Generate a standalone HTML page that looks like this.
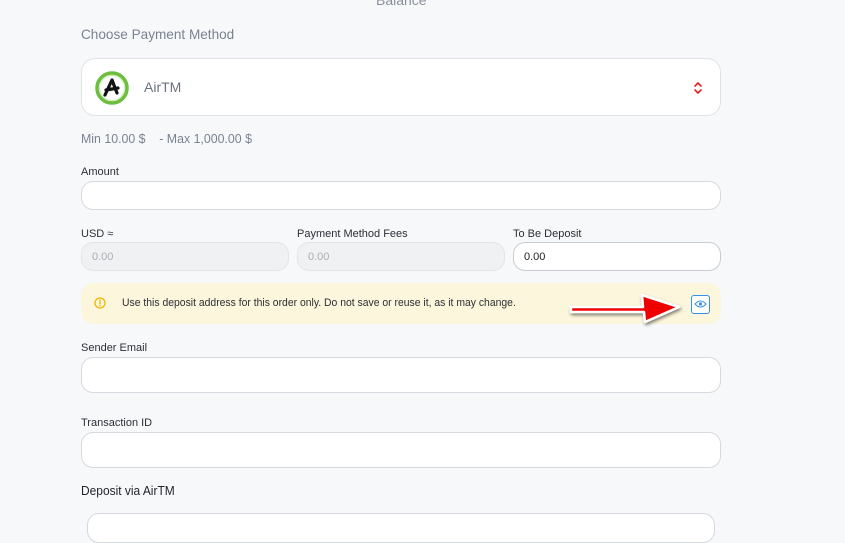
<!DOCTYPE html>
<html><head><meta charset="utf-8">
<style>
*{margin:0;padding:0;box-sizing:border-box}
body{width:845px;height:515px;overflow:hidden;background:#f7f8fa;font-family:"Liberation Sans",sans-serif;position:relative}
.a{position:absolute;white-space:nowrap}
.lbl{font-size:11px;color:#2b2f36}
.inp{position:absolute;background:#fff;border:1px solid #d6d9df;border-radius:12px}
.dis{background:#f0f1f3;border-color:#e2e4e8}
.val{font-size:11px;position:absolute;left:10px;top:8px}
.sx{transform-origin:left}
</style></head><body>
<div class="a" style="left:376px;top:-8px;font-size:14px;color:#8a909a">Balance</div>
<div class="a sx" style="left:81px;top:26px;font-size:14px;color:#7a8290;transform:scaleX(0.97)">Choose Payment Method</div>
<div class="inp" style="left:81px;top:58px;width:640px;height:58px;border-radius:14px;border-color:#e0e2e6">
  <svg class="a" style="left:13px;top:12px" width="34" height="34" viewBox="0 0 34 34">
    <circle cx="17" cy="17" r="15" fill="#fff" stroke="#6bbf3a" stroke-width="3.5"/>
    <circle cx="17" cy="17" r="12.5" fill="none" stroke="#cde8b8" stroke-width="1"/>
    <path d="M10 24 L17 9 L22 22 M11 19 L23 17" fill="none" stroke="#111" stroke-width="3.2" stroke-linecap="round" stroke-linejoin="round"/>
  </svg>
  <div class="a" style="left:62px;top:20px;font-size:14px;color:#6c7380">AirTM</div>
  <svg class="a" style="left:611px;top:21px" width="10" height="16" viewBox="0 0 10 16">
    <path d="M2 6 L5 3 L8 6 M2 10 L5 13 L8 10" fill="none" stroke="#e02020" stroke-width="1.6" stroke-linecap="round"/>
  </svg>
</div>
<div class="a sx" style="left:81px;top:131px;font-size:13px;color:#7a8290;transform:scaleX(0.95)">Min 10.00 $&nbsp;&nbsp;&nbsp; - Max 1,000.00 $</div>
<div class="a lbl" style="left:81px;top:166px">Amount</div>
<div class="inp" style="left:81px;top:181px;width:640px;height:29px"></div>
<div class="a lbl" style="left:81px;top:228px">USD ≈</div>
<div class="a lbl" style="left:297px;top:228px">Payment Method Fees</div>
<div class="a lbl" style="left:513px;top:228px">To Be Deposit</div>
<div class="inp dis" style="left:81px;top:242px;width:208px;height:29px"><span class="val" style="color:#a8adb5">0.00</span></div>
<div class="inp dis" style="left:297px;top:242px;width:208px;height:29px"><span class="val" style="color:#a8adb5">0.00</span></div>
<div class="inp" style="left:513px;top:242px;width:208px;height:29px;border-color:#c9ccd2"><span class="val" style="color:#222">0.00</span></div>
<div class="a" style="left:81px;top:283px;width:640px;height:41px;background:#fcf7dc;border-radius:12px"></div>
<svg class="a" style="left:94px;top:297px" width="12" height="12" viewBox="0 0 12 12"><circle cx="6" cy="6" r="5" fill="none" stroke="#f0b400" stroke-width="1.3"/><path d="M6 3.2V6.6M6 8.2V8.8" stroke="#f0b400" stroke-width="1.3" stroke-linecap="round"/></svg>
<div class="a sx" style="left:122px;top:297px;font-size:11px;color:#2b2f36;transform:scaleX(0.945)">Use this deposit address for this order only. Do not save or reuse it, as it may change.</div>
<div class="a" style="left:691px;top:295px;width:19px;height:19px;border:1px solid #3a8ee6;border-radius:3px;background:#fff"></div>
<svg class="a" style="left:694px;top:299px" width="13" height="10" viewBox="0 0 13 10"><path d="M1 5 Q6.5 -1 12 5 Q6.5 11 1 5Z" fill="none" stroke="#3a8ee6" stroke-width="1"/><circle cx="6.5" cy="5" r="1.6" fill="#3a8ee6"/></svg>
<svg class="a" style="left:565px;top:290px" width="120" height="40" viewBox="0 0 120 40">
  <defs><filter id="s" x="-10%" y="-30%" width="130%" height="170%"><feDropShadow dx="1" dy="2" stdDeviation="1.5" flood-opacity="0.5"/></filter></defs>
  <path d="M6 17 L78 17 L77 5 L114 17 L80 32 L79 22 L6 22 Z" fill="#ee0000" stroke="#fff" stroke-width="2.5" stroke-linejoin="round" filter="url(#s)"/>
</svg>
<div class="a lbl" style="left:81px;top:342px">Sender Email</div>
<div class="inp" style="left:81px;top:357px;width:640px;height:36px"></div>
<div class="a lbl" style="left:81px;top:417px">Transaction ID</div>
<div class="inp" style="left:81px;top:432px;width:640px;height:36px"></div>
<div class="a sx" style="left:81px;top:483px;font-size:13px;color:#1f2329;transform:scaleX(0.92)">Deposit via AirTM</div>
<div class="inp" style="left:87px;top:513px;width:628px;height:30px"></div>
</body></html>
